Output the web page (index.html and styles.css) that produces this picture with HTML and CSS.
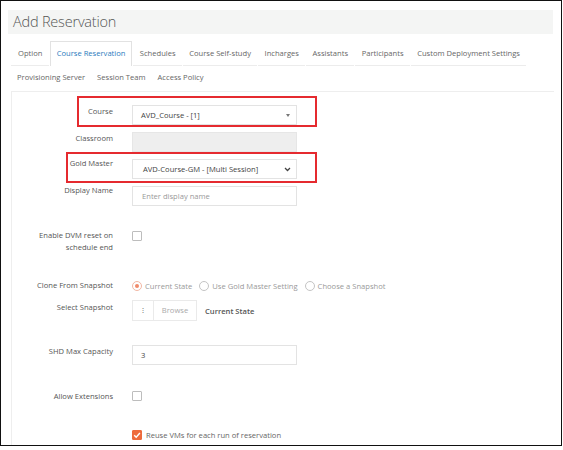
FILE: index.html
```html
<!DOCTYPE html>
<html>
<head>
<meta charset="utf-8">
<link rel="stylesheet" href="styles.css">
</head>
<body>
<div class="frame">
  <div class="header">Add Reservation</div>
  <ul class="tabs">
    <li>Option</li>
    <li class="active">Course Reservation</li>
    <li>Schedules</li>
    <li>Course Self-study</li>
    <li>Incharges</li>
    <li>Assistants</li>
    <li>Participants</li>
    <li>Custom Deployment Settings</li>
  </ul>
  <ul class="tabs tabs2">
    <li>Provisioning Server</li>
    <li>Session Team</li>
    <li>Access Policy</li>
  </ul>
  <div class="panel">
    <div class="form">
      <div class="row r-course">
        <label>Course</label>
        <div class="select">AVD_Course - [1]<span class="caret"></span></div>
      </div>
      <div class="row r-class">
        <label>Classroom</label>
        <div class="input disabled"></div>
      </div>
      <div class="row r-gold">
        <label>Gold Master</label>
        <div class="select gold">AVD-Course-GM - [Multi Session]<svg class="chev" viewBox="0 0 8 6" width="7" height="5"><path d="M1 1.2 L4 4.2 L7 1.2" fill="none" stroke="#444" stroke-width="1.5"/></svg></div>
      </div>
      <div class="row r-display">
        <label>Display Name</label>
        <div class="input placeholder">Enter display name</div>
      </div>
      <div class="row r-dvm">
        <label>Enable DVM reset on<br>schedule end</label>
        <span class="check"></span>
      </div>
      <div class="row r-clone">
        <label>Clone From Snapshot</label>
        <div class="radios">
          <span class="radio on"></span><span class="rtext">Current State</span>
          <span class="radio"></span><span class="rtext">Use Gold Master Setting</span>
          <span class="radio"></span><span class="rtext">Choose a Snapshot</span>
        </div>
      </div>
      <div class="row r-snap">
        <label>Select Snapshot</label>
        <div class="snap">
          <div class="igroup"><span class="dots">⁝</span><span class="browse">Browse</span></div>
          <span class="cur">Current State</span>
        </div>
      </div>
      <div class="row r-shd">
        <label>SHD Max Capacity</label>
        <div class="input value">3</div>
      </div>
      <div class="row r-ext">
        <label>Allow Extensions</label>
        <span class="check"></span>
      </div>
      <div class="row r-reuse">
        <label></label>
        <div class="reuse"><span class="check on"><svg viewBox="0 0 10 10" width="10" height="10"><path d="M2.2 5.2 L4.2 7.2 L7.9 3" fill="none" stroke="#fff" stroke-width="1.4"/></svg></span><span class="rtext">Reuse VMs for each run of reservation</span></div>
      </div>
      <div class="mark mark1"></div>
      <div class="mark mark2"></div>
    </div>
  </div>
</div>
</body>
</html>
```

FILE: styles.css
```css
* { box-sizing: border-box; }
html, body { margin: 0; padding: 0; background: #fff; }
body { font-family: "Open Sans", "Noto Sans", sans-serif; color: #555; }

.frame {
  width: 562px;
  height: 446px;
  border: 1px solid #111;
  padding: 9px 0 0 7px;
  overflow: hidden;
}

.header {
  width: 545px;
  height: 24px;
  background: #f4f5f4;
  padding-left: 5px;
  font-size: 14.5px;
  line-height: 23px;
  font-weight: 300;
  color: #555;
  letter-spacing: -0.2px;
}

.tabs {
  list-style: none;
  margin: 7px 0 0 3px;
  padding: 0;
  display: flex;
  font-size: 7.6px;
  color: #666;
}
.tabs li {
  padding: 0 6.3px;
  height: 25px;
  line-height: 25px;
  border-bottom: 1px solid #ececec;
  margin-right: 1px;
  white-space: nowrap;
}
.tabs li:first-child { padding-left: 7px; }
.tabs li.active {
  color: #2a7bbd;
  border: 1px solid #e2e2e2;
  border-bottom: none;
  line-height: 23px;
  padding: 0 6px;
}
.tabs2 { margin-top: 0; }
.tabs2 li { border-bottom: none; height: 23px; line-height: 23px; padding: 0 6px; margin-right: 0; }
.tabs2 li:first-child { padding-left: 6px; }

.panel {
  margin: 2px 0 0 3px;
  width: 543px;
  height: 360px;
  border-top: 1px solid #eeeeee;
  border-left: 1px solid #eeeeee;
}

.form {
  position: relative;
  padding-top: 13px;
  font-size: 7.6px;
  color: #555;
}

.row {
  display: grid;
  grid-template-columns: 101px 165px;
  column-gap: 19px;
  align-items: start;
}
.row label {
  text-align: right;
  line-height: 12px;
  white-space: nowrap;
}

.select, .input {
  height: 20px;
  border: 1px solid #e3e3e3;
  background: #fff;
  line-height: 18px;
  padding-left: 8px;
  color: #444;
  position: relative;
}
.input.disabled { background: #eeeeee; border-color: #e6e6e6; }
.input.placeholder { color: #999; padding-left: 9px; }
.input.value { padding-left: 8px; }
.select.gold { height: 20px; padding-left: 10px; }

.caret {
  position: absolute;
  right: 6px;
  top: 8px;
  border-left: 2.5px solid transparent;
  border-right: 2.5px solid transparent;
  border-top: 3px solid #777;
}
.chev { position: absolute; right: 5px; top: 7px; }

.r-class { margin-top: 7px; }
.r-gold { margin-top: 7px; }
.r-display { margin-top: 7px; }
.r-dvm { margin-top: 25px; }
.r-clone { margin-top: 27px; }
.r-snap { margin-top: 9px; }
.r-shd { margin-top: 24px; }
.r-ext { margin-top: 24px; }
.r-reuse { margin-top: 26px; }

.r-dvm label { line-height: 11.5px; margin-top: -1px; }
.r-gold label { line-height: 8px; }
.r-display label { line-height: 8px; }
.r-clone label { line-height: 11px; }
.r-snap label { line-height: 15px; }
.r-shd label { line-height: 13px; }
.r-ext label { line-height: 15px; margin-top: 0; }
.r-ext .check { margin-top: 2px; }

.check {
  display: inline-block;
  width: 10px;
  height: 10px;
  border: 1px solid #bdbdbd;
  border-radius: 1px;
  background: #fff;
  position: relative;
}
.check.on {
  background: #ee6b3c;
  border-color: #ee6b3c;
}
.check.on svg { position: absolute; left: -1px; top: -1px; }

.radios {
  display: flex;
  align-items: center;
  white-space: nowrap;
  height: 11px;
  color: #999;
}
.radio {
  display: inline-block;
  width: 10px;
  height: 10px;
  border: 1px solid #c4c4c4;
  border-radius: 50%;
  margin-right: 3px;
  position: relative;
  flex: none;
}
.radio.on { border-color: #f2b7a4; }
.radio.on::after {
  content: "";
  position: absolute;
  left: 2px; top: 2px;
  width: 4px; height: 4px;
  border-radius: 50%;
  background: #f08a6a;
}
.rtext { margin-right: 7px; }

.snap { display: flex; align-items: center; }
.igroup {
  display: flex;
  height: 21px;
  border: 1px solid #eaeaea;
  color: #aaa;
}
.dots {
  width: 21px;
  text-align: center;
  line-height: 19px;
  color: #777;
  border-right: 1px solid #eaeaea;
}
.browse { width: 42px; text-align: center; line-height: 19px; }
.cur { margin-left: 8px; font-weight: 600; color: #555; }

.reuse { display: flex; align-items: center; color: #666; }
.reuse .rtext { margin-left: 4px; }

.mark {
  position: absolute;
  border: 2px solid #e52a2f;
  pointer-events: none;
}
.mark1 { left: 65px; top: 4px; width: 240px; height: 31px; }
.mark2 { left: 54px; top: 60px; width: 251px; height: 31px; }
```
